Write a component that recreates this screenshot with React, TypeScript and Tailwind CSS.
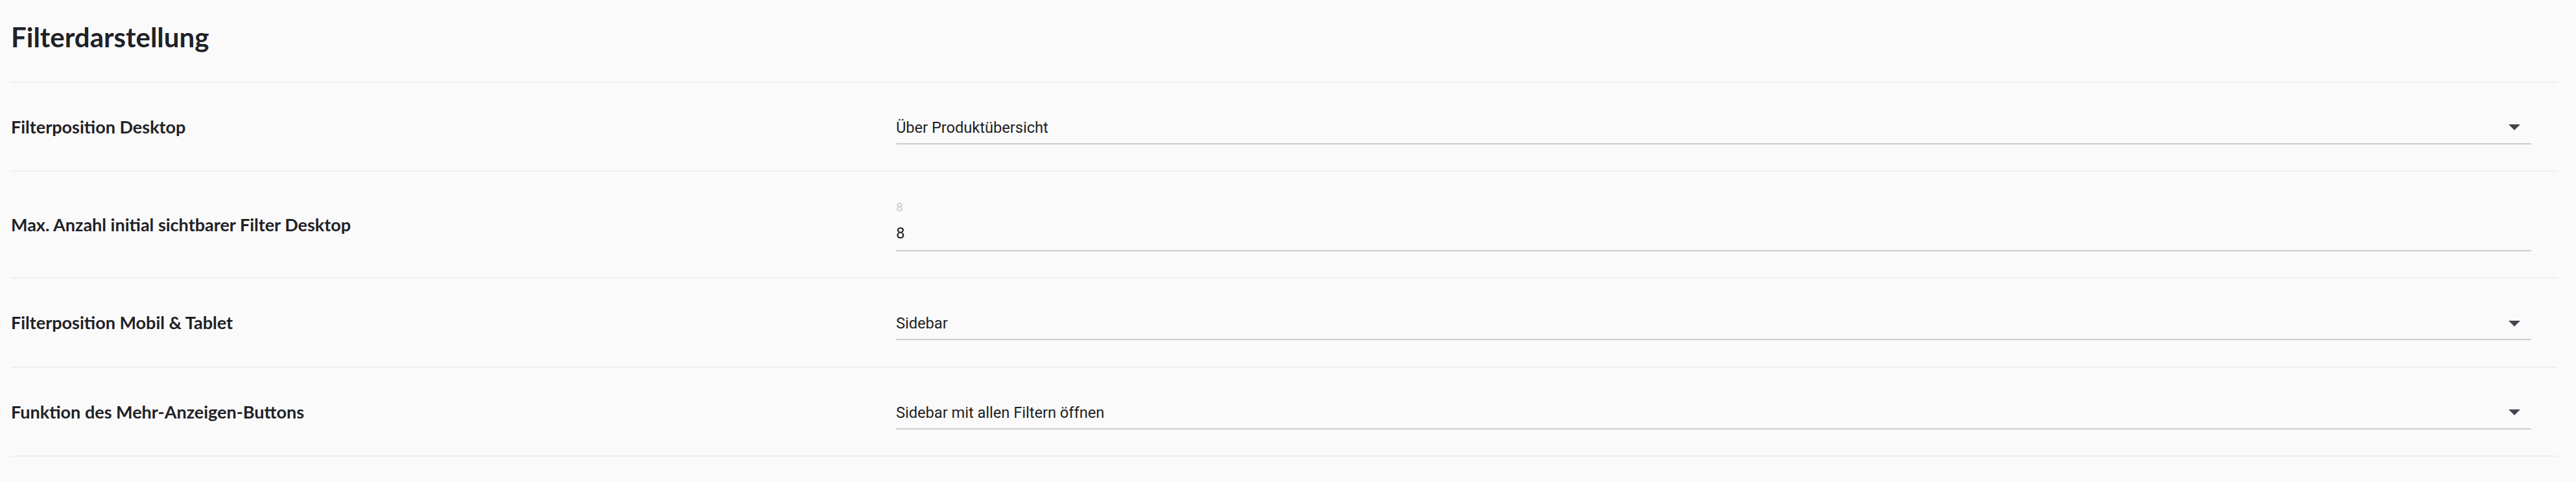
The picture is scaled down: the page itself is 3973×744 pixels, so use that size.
import React from "react";

const labelFont = { fontFamily: "Lato, 'Noto Sans', sans-serif" };
const valueFont = { fontFamily: "Roboto, 'Noto Sans', sans-serif" };

function Arrow() {
  return (
    <svg width="18" height="9" viewBox="0 0 18 9" className="shrink-0">
      <path d="M0 0 L18 0 L9 9 Z" fill="#46414b" />
    </svg>
  );
}

function SelectField({ value }: { value: string }) {
  return (
    <div className="flex-1 mr-[40px] pt-[16px]">
      <div className="flex items-center justify-between pr-[17px] pb-[12px] border-b-2 border-[#c9d0c9]">
        <span className="text-[23.6px] leading-[24px] text-[#212121]" style={valueFont}>
          {value}
        </span>
        <Arrow />
      </div>
    </div>
  );
}

function InputField({ label, value }: { label: string; value: string }) {
  return (
    <div className="flex-1 mr-[40px] pt-[5px]">
      <div className="text-[19px] leading-[20px] text-[#c6cbc6] mb-[18px]" style={valueFont}>
        {label}
      </div>
      <div className="pb-[12px] border-b-2 border-[#c9d0c9]">
        <span className="text-[24px] leading-[24px] text-[#212121]" style={valueFont}>
          {value}
        </span>
      </div>
    </div>
  );
}

function Row({
  label,
  height,
  last,
  children,
}: {
  label: string;
  height: string;
  last?: boolean;
  children: React.ReactNode;
}) {
  return (
    <div
      className={
        "flex items-center border-t-2 border-[#efefef] " +
        height +
        (last ? " border-b-2" : "")
      }
    >
      <div
        className="w-[1365px] shrink-0 text-[27px] leading-[28px] font-bold text-[#1f2227]"
        style={labelFont}
      >
        {label}
      </div>
      {children}
    </div>
  );
}

export default function App() {
  return (
    <div className="w-full h-[744px] bg-[#fafafa] pl-[17px] pr-[29px]">
      <div className="h-[126px] pt-[33px]">
        <h1
          className="text-[42px] leading-[48px] font-bold text-[#1f2227]"
          style={labelFont}
        >
          Filterdarstellung
        </h1>
      </div>
      <Row label="Filterposition Desktop" height="h-[137px]">
        <SelectField value="Über Produktübersicht" />
      </Row>
      <Row label="Max. Anzahl initial sichtbarer Filter Desktop" height="h-[165px]">
        <InputField label="8" value="8" />
      </Row>
      <Row label="Filterposition Mobil & Tablet" height="h-[138px]">
        <SelectField value="Sidebar" />
      </Row>
      <Row label="Funktion des Mehr-Anzeigen-Buttons" height="h-[139px]" last>
        <SelectField value="Sidebar mit allen Filtern öffnen" />
      </Row>
    </div>
  );
}
